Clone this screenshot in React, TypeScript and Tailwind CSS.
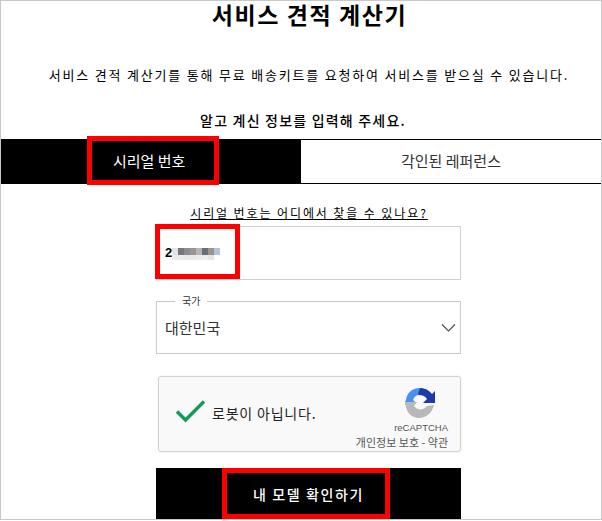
import React from "react";

const ko = { fontFamily: '"Noto Sans CJK KR", "Liberation Sans", sans-serif' };

const App = () => {
  return (
    <div className="relative h-[521px] w-[602px] overflow-hidden bg-white" style={ko}>
      <div className="flex h-[519px] flex-col items-center overflow-hidden border-x border-t border-[#c8c8c8]">
        <h1 className="ml-[17px] h-[30px] text-[23px] font-bold leading-[26px] tracking-[1.6px] text-black">서비스 견적 계산기</h1>
        <p className="ml-[16px] mt-[34px] h-[20px] text-[13px] leading-[20px] tracking-[1.8px] text-black">서비스 견적 계산기를 통해 무료 배송키트를 요청하여 서비스를 받으실 수 있습니다.</p>
        <p className="ml-[4px] mt-[25px] h-[20px] text-sm font-medium leading-[20px] tracking-[1.2px] text-black">알고 계신 정보를 입력해 주세요.</p>
        <div className="mt-[9px] flex h-[45px] w-full shrink-0 border-y border-black text-[15px]">
          <div className="flex w-[300px] items-center bg-black pl-[112px] text-white">시리얼 번호</div>
          <div className="flex flex-1 items-center pl-[100px] text-[#333]">각인된 레퍼런스</div>
        </div>
        <a className="ml-[16px] mt-[22px] h-[15px] shrink-0 text-xs leading-[13px] tracking-[1.9px] text-black underline">시리얼 번호는 어디에서 찾을 수 있나요?</a>
        <div className="ml-[15px] mt-[5px] flex h-[54px] w-[305px] shrink-0 items-center border border-[#cdd2da] pl-[8px]">
          <span className="text-[13px] font-bold text-black" style={{ fontFamily: '"Liberation Sans", sans-serif' }}>2</span>
          <div className="mt-[2px] grid grid-cols-[repeat(8,6px)] grid-rows-[7px_5px]">
            <div className="bg-[#e4e4e8]" />
            <div className="bg-[#77777f]" />
            <div className="bg-[#8b8b90]" />
            <div className="bg-[#9a9494]" />
            <div className="bg-[#b8b4b4]" />
            <div className="bg-[#66707a]" />
            <div className="bg-[#98938f]" />
            <div className="bg-[#b4c4d8]" />
            <div className="bg-[#eeeaea]" />
            <div className="bg-[#f0ece4]" />
            <div className="bg-[#e8e8ec]" />
            <div className="bg-[#ece8e8]" />
            <div className="bg-[#e8ecf0]" />
            <div className="bg-[#eeeeee]" />
            <div className="bg-[#e4e4e8]" />
            <div className="bg-white" />
          </div>
        </div>
        <fieldset className="ml-[15px] mt-[15px] h-[59px] w-[305px] shrink-0 border border-[#c8c8c8] pl-[8px] pr-[2px]">
          <legend className="ml-[10px] px-[7px] text-[10px] leading-[12px] text-[#333]">국가</legend>
          <div className="flex h-[42px] items-center justify-between">
            <span className="text-[15px] text-[#333]">대한민국</span>
            <svg width="18" height="12" viewBox="0 0 18 12" fill="none" stroke="#4a4f57" strokeWidth="1.2"><path d="M2 2.5l6.5 6.5 6.5-6.5" /></svg>
          </div>
        </fieldset>
        <div className="ml-[17px] mt-[22px] flex h-[76px] w-[303px] shrink-0 rounded-[3px] border border-[#d3d3d3] bg-[#f9f9f9] shadow-[0_0_3px_rgba(0,0,0,0.08)]">
          <svg className="ml-[16px] mt-[22px] shrink-0" width="31" height="24" viewBox="0 0 31 24" fill="none" stroke="#0f9d58" strokeWidth="3.4"><path d="M2 12.5l8.5 8.5L29 2.5" /></svg>
          <span className="ml-[6px] mt-[26px] text-sm leading-[20px] tracking-[0.8px] text-[#222]">로봇이 아닙니다.</span>
          <div className="ml-auto mr-[12px] mt-[10px] flex flex-col items-end">
            <svg className="mr-[12px]" width="31" height="32" viewBox="0 0 31 32">
              <path d="M1 13C2 5 8 1 15 1c2 0 3 .5 4 1l-5 6c-3 0-5 2-6 5l2 2H0z" fill="#4a90f0" />
              <path d="M15 1c5 0 9 2 12 6l3-3v12H18l4-4c-1-2-4-4-8-4l-1-1z" fill="#1c3aa9" />
              <path d="M0 15h12l-3 4c2 3 6 4 9 3 2-1 3-2 4-3l7-1c-2 8-8 13-15 13C6 31 1 24 1 19l-1-1z" fill="#b8b8b8" />
            </svg>
            <span className="mt-[3px] text-[9.5px] leading-[12px] text-[#555]" style={{ fontFamily: '"Liberation Sans", sans-serif' }}>reCAPTCHA</span>
            <span className="mt-[2px] whitespace-nowrap text-[11px] leading-[13px] text-[#555]">개인정보 보호 - 약관</span>
          </div>
        </div>
        <button className="ml-[15px] mt-[16px] flex h-[51px] w-[305px] shrink-0 items-center justify-center bg-black text-sm font-medium tracking-[1.6px] text-white">내 모델 확인하기</button>
      </div>
      <div className="h-[2px] border-t border-[#c8c8c8] bg-white" />
      <div className="absolute left-[87px] top-[136px] h-[49px] w-[132px] border-[5px] border-[#ff0000]" />
      <div className="absolute left-[155px] top-[224px] h-[55px] w-[85px] border-[5px] border-[#ff0000]" />
      <div className="absolute left-[222px] top-[468px] h-[51px] w-[168px] border-[5px] border-[#ff0000]" />
    </div>
  );
};

export default App;
